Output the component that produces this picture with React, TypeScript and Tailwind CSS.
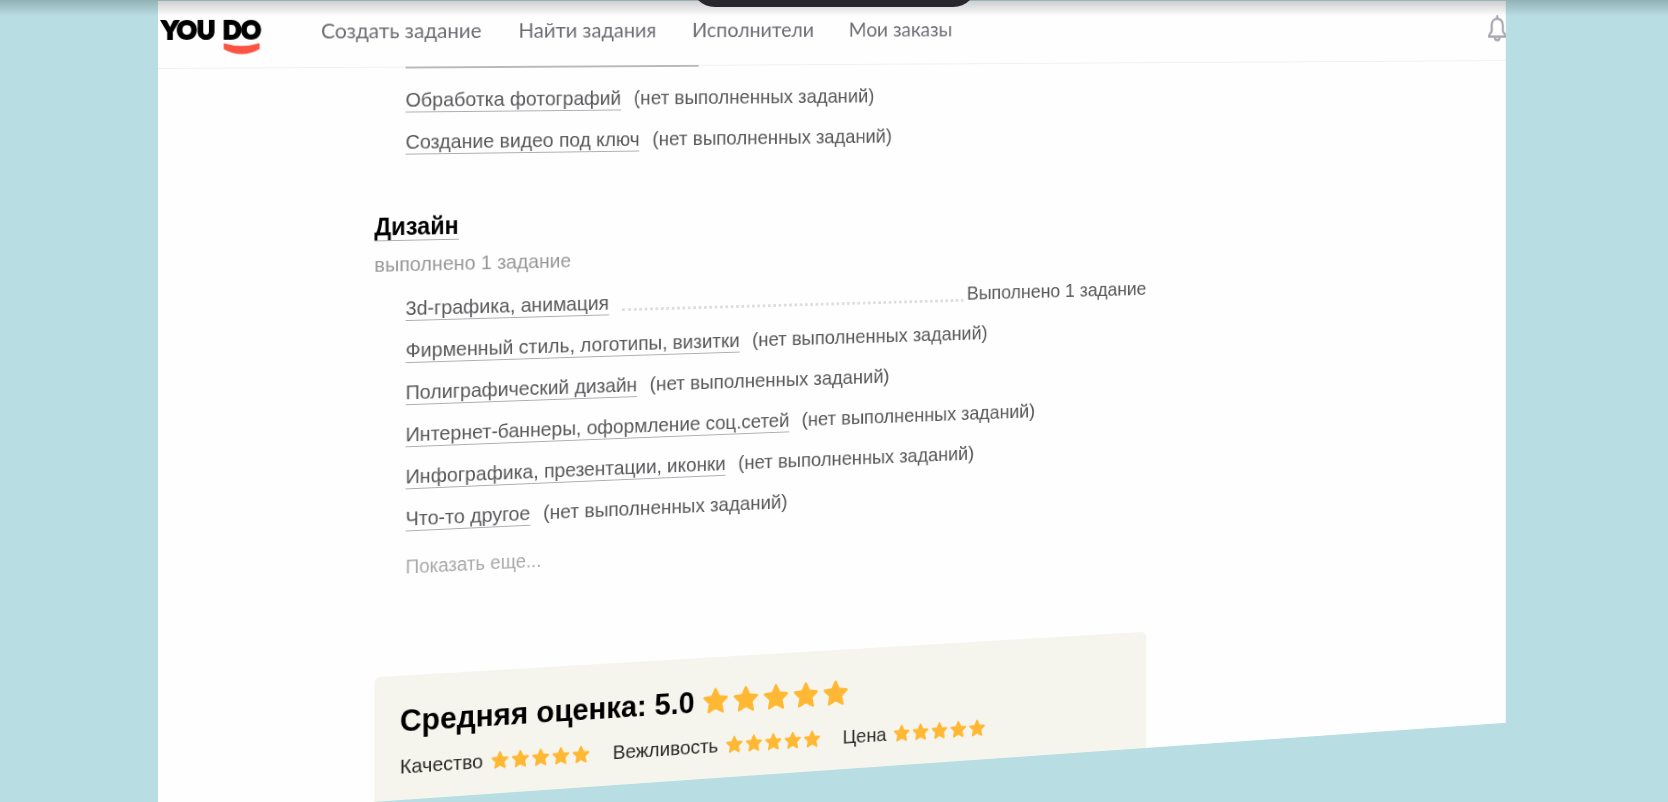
import { clsx } from 'clsx'

interface Service {
  title: string
  done?: string
}

const navItems = ['Создать задание', 'Найти задания', 'Исполнители', 'Мои заказы']

const photoServices: Service[] = [
  { title: 'Обработка фотографий' },
  { title: 'Создание видео под ключ' },
]

const designServices: Service[] = [
  { title: '3d-графика, анимация', done: 'Выполнено 1 задание' },
  { title: 'Фирменный стиль, логотипы, визитки' },
  { title: 'Полиграфический дизайн' },
  { title: 'Интернет-баннеры, оформление соц.сетей' },
  { title: 'Инфографика, презентации, иконки' },
  { title: 'Что-то другое' },
]

const ratings = ['Качество', 'Вежливость', 'Цена']

function Logo() {
  return (
    <a href="#" className="flex w-[168px] shrink-0 gap-2 pl-1 font-['Lato',sans-serif] text-[25px] leading-7 font-black text-black [-webkit-text-stroke:2px_black]">
      <span>YOU</span>
      <span className="relative">
        DO
        <svg viewBox="0 0 38 12" className="absolute top-full left-0 h-3 w-full" fill="#fb5442">
          <path d="M0.5 0.5 Q19 6 37.5 0.5 V6.5 Q19 16.5 0.5 6.5 Z" />
        </svg>
      </span>
    </a>
  )
}

function Bell() {
  return (
    <svg viewBox="0 0 26 30" className="h-[30px] w-[26px]" fill="none" stroke="#a9a7b3" strokeWidth="2.8" strokeLinejoin="round">
      <path d="M13 4.2 C8.2 4.2 5.8 7.6 5.8 11.6 V17.5 C5.8 20 2.2 21.5 2.2 24.3 H23.8 C23.8 21.5 20.2 20 20.2 17.5 V11.6 C20.2 7.6 17.8 4.2 13 4.2 Z" />
      <path d="M13 1.4 V4" strokeLinecap="round" />
      <path d="M10 25 C10 29.6 16 29.6 16 25" />
    </svg>
  )
}

function Stars({ large = false }: { large?: boolean }) {
  return (
    <span className={clsx('flex', large ? 'gap-1' : 'gap-0.5')} role="img" aria-label="5 из 5">
      {[1, 2, 3, 4, 5].map(n => (
        <svg key={n} viewBox="0 0 24 24" className={large ? 'size-[30px]' : 'size-5'} fill="#ffb833" stroke="#ffb833" strokeWidth="2" strokeLinejoin="round">
          <path d="M12 2 L15.1 8.4 L22 9.2 L17 14.1 L18.3 21.2 L12 17.8 L5.7 21.2 L7 14.1 L2 9.2 L8.9 8.4 Z" />
        </svg>
      ))}
    </span>
  )
}

function ServiceRow({ title, done }: Service) {
  return (
    <li className="flex items-start gap-3.5">
      <a href="#" className="border-b border-[#aeaeb2]">{title}</a>
      {done ? (
        <span className="flex flex-1 gap-1">
          <span className="mt-[18px] h-[3px] flex-1 border-b-[3px] border-dotted border-[#dedede]" />
          {done}
        </span>
      ) : (
        <span>(нет выполненных заданий)</span>
      )}
    </li>
  )
}

export default function App() {
  return (
    <div className="relative h-screen overflow-hidden bg-[#b8dee3] font-['Liberation_Sans',Arial,sans-serif] perspective-[4450px] perspective-origin-[50%_0px]">
      <div className="mt-px ml-[9.5%] w-[92.8%] origin-top-left rotate-y-[22deg] overflow-hidden bg-[#fefefe] outline outline-transparent">
        <header className="flex h-[68px] items-start border-b border-[#f0f0f0] pt-[14px]">
          <Logo />
          <nav className="flex flex-1 gap-10 pt-0.5 font-['Lato',sans-serif] text-[22px] leading-7 text-[#6c6c73]">
            {navItems.map(item => (
              <a key={item} href="#">{item}</a>
            ))}
          </nav>
          <button className="mt-0.5 -mr-0.5" aria-label="Уведомления">
            <Bell />
          </button>
        </header>

        <main className="-mt-px ml-[224px] w-[873px] text-[21px] leading-6 text-[#58585b]">
          <ul className="flex flex-col gap-[18px] pl-[33px]">
            <li className="mb-0.5 w-[319px] border-b-2 border-[#b9b9bb]" />
            {photoServices.map(s => (
              <ServiceRow key={s.title} {...s} />
            ))}
          </ul>

          <section className="mt-[59px]">
            <h2 className="flex text-[25px] leading-7 font-bold text-black">
              <a href="#" className="border-b border-[#aeaeb2]">Дизайн</a>
            </h2>
            <p className="mt-3 text-[#98989a]">выполнено 1 задание</p>
            <ul className="mt-[21px] flex flex-col gap-[18px] pl-[33px]">
              {designServices.map(s => (
                <ServiceRow key={s.title} {...s} />
              ))}
            </ul>
            <button className="mt-6 ml-[33px] text-xl leading-6 text-[#a9a9ab]">Показать еще...</button>
          </section>

          <section className="mt-[99px] rounded-t-md bg-[#f6f5ed] px-[27px] pt-7 pb-[22px] text-[#2b2b2b]">
            <h2 className="flex items-center gap-2 text-[32px] leading-9 font-bold text-black">
              Средняя оценка: 5.0
              <Stars large />
            </h2>
            <div className="mt-[17px] flex gap-[25px]">
              {ratings.map(label => (
                <div key={label} className="flex items-center gap-2">
                  {label}
                  <Stars />
                </div>
              ))}
            </div>
          </section>
        </main>
      </div>

      <div className="pointer-events-none absolute inset-x-0 top-0 h-4 bg-linear-to-b from-black/20 to-transparent" />
      <div className="absolute -top-10 left-1/2 h-[47px] w-[286px] -translate-x-1/2 rounded-b-3xl bg-[#28272b]" />
    </div>
  )
}
